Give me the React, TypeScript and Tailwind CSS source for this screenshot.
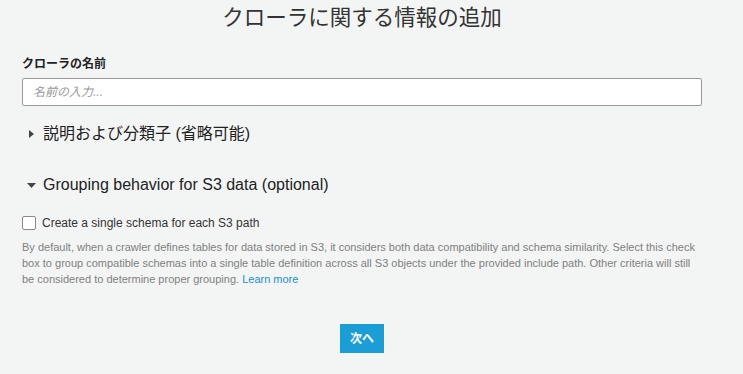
export default function App() {
  const font = { fontFamily: '"Liberation Sans", "Noto Sans CJK JP", Arial, sans-serif' };
  return (
    <div className="w-[743px] h-[374px] bg-[#f3f5f4] overflow-hidden text-[#222]" style={font}>
      <div className="w-[680px] ml-[22px]">
        <h1 className="text-center text-[21.5px] leading-[28px] pt-[4px] text-[#333] font-normal">クローラに関する情報の追加</h1>
        <div className="mt-[24px] text-[12px] font-bold leading-[16px] text-[#222]">クローラの名前</div>
        <div className="mt-[6px] w-[680px] h-[28px] bg-white border border-[#999] rounded-[2px] flex items-center px-[10px]">
          <span className="text-[12px] italic text-[#999]">名前の入力...</span>
        </div>
        <div className="mt-[16px] flex items-center h-[24px] pl-[7px]">
          <svg width="5" height="8" viewBox="0 0 5 8" className="mr-[9px]"><path d="M0 0 L5 4 L0 8 Z" fill="#444" /></svg>
          <span className="text-[16px] text-[#222]">説明および分類子 (省略可能)</span>
        </div>
        <div className="mt-[27px] flex items-center h-[24px] pl-[5px]">
          <svg width="9" height="5" viewBox="0 0 9 5" className="mr-[7px]"><path d="M0 0 L9 0 L4.5 5 Z" fill="#444" /></svg>
          <span className="text-[16px] text-[#222]">Grouping behavior for S3 data (optional)</span>
        </div>
        <div className="mt-[17px] flex items-center">
          <div className="w-[14px] h-[14px] bg-white border border-[#888] rounded-[2px] mr-[6px]" />
          <span className="text-[12px] text-[#333]">Create a single schema for each S3 path</span>
        </div>
        <p className="mt-[7px] text-[11px] leading-[16px] text-[#808080]">
          By default, when a crawler defines tables for data stored in S3, it considers both data compatibility and schema similarity. Select this check box to group compatible schemas into a single table definition across all S3 objects under the provided include path. Other criteria will still be considered to determine proper grouping. <span className="text-[#1a8fcf]">Learn more</span>
        </p>
        <div className="flex justify-center mt-[37px]">
          <button className="w-[44px] h-[29px] bg-[#1b9ed5] text-white text-[12px] font-bold">次へ</button>
        </div>
      </div>
    </div>
  );
}
